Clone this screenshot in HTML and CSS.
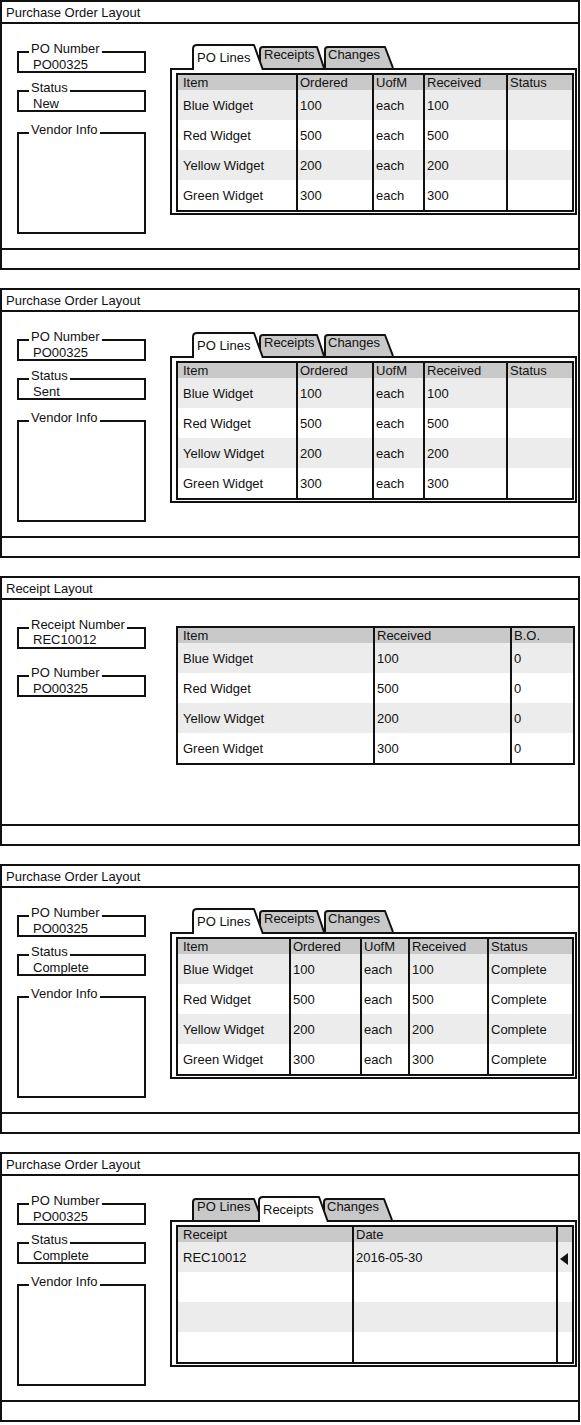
FILE: index.html
```html
<!DOCTYPE html>
<html>
<head>
    <meta charset="utf-8">
    <link rel="stylesheet" href="styles.css">
</head>
<body>
<div class="page">

    <!-- PO: new -->
    <section class="window">
        <div class="titlebar">Purchase Order Layout</div>
        <div class="window-body">
            <div class="side">
                <div class="field"><span class="field-label">PO Number</span><div class="field-value">PO00325</div></div>
                <div class="field field-next"><span class="field-label">Status</span><div class="field-value">New</div></div>
                <div class="field field-area"><span class="field-label">Vendor Info</span></div>
            </div>
            <div class="main">
                <div class="tabs">
                    <div class="tab tab-active tab-a">
                        <svg class="tab-shape" width="72" height="26" viewBox="0 0 72 26"><path d="M1 26V5Q1 1 5 1H62L71 26"/></svg>
                        <span class="tab-label">PO Lines</span>
                    </div>
                    <div class="tab tab-b">
                        <svg class="tab-shape" width="66" height="22" viewBox="0 0 66 22"><path d="M1 22V4Q1 1 4 1H58L65 22"/></svg>
                        <span class="tab-label">Receipts</span>
                    </div>
                    <div class="tab tab-c">
                        <svg class="tab-shape" width="70" height="22" viewBox="0 0 70 22"><path d="M1 22V4Q1 1 4 1H61L69 22"/></svg>
                        <span class="tab-label">Changes</span>
                    </div>
                </div>
                <div class="tabpanel">
                    <div class="grid grid-po">
                        <div class="grid-row grid-head"><div class="grid-cell">Item</div><div class="grid-cell">Ordered</div><div class="grid-cell">UofM</div><div class="grid-cell">Received</div><div class="grid-cell">Status</div></div>
                        <div class="grid-row"><div class="grid-cell">Blue Widget</div><div class="grid-cell">100</div><div class="grid-cell">each</div><div class="grid-cell">100</div><div class="grid-cell"></div></div>
                        <div class="grid-row"><div class="grid-cell">Red Widget</div><div class="grid-cell">500</div><div class="grid-cell">each</div><div class="grid-cell">500</div><div class="grid-cell"></div></div>
                        <div class="grid-row"><div class="grid-cell">Yellow Widget</div><div class="grid-cell">200</div><div class="grid-cell">each</div><div class="grid-cell">200</div><div class="grid-cell"></div></div>
                        <div class="grid-row"><div class="grid-cell">Green Widget</div><div class="grid-cell">300</div><div class="grid-cell">each</div><div class="grid-cell">300</div><div class="grid-cell"></div></div>
                    </div>
                </div>
            </div>
        </div>
        <div class="statusbar"></div>
    </section>

    <!-- PO: sent -->
    <section class="window">
        <div class="titlebar">Purchase Order Layout</div>
        <div class="window-body">
            <div class="side">
                <div class="field"><span class="field-label">PO Number</span><div class="field-value">PO00325</div></div>
                <div class="field field-next"><span class="field-label">Status</span><div class="field-value">Sent</div></div>
                <div class="field field-area"><span class="field-label">Vendor Info</span></div>
            </div>
            <div class="main">
                <div class="tabs">
                    <div class="tab tab-active tab-a">
                        <svg class="tab-shape" width="72" height="26" viewBox="0 0 72 26"><path d="M1 26V5Q1 1 5 1H62L71 26"/></svg>
                        <span class="tab-label">PO Lines</span>
                    </div>
                    <div class="tab tab-b">
                        <svg class="tab-shape" width="66" height="22" viewBox="0 0 66 22"><path d="M1 22V4Q1 1 4 1H58L65 22"/></svg>
                        <span class="tab-label">Receipts</span>
                    </div>
                    <div class="tab tab-c">
                        <svg class="tab-shape" width="70" height="22" viewBox="0 0 70 22"><path d="M1 22V4Q1 1 4 1H61L69 22"/></svg>
                        <span class="tab-label">Changes</span>
                    </div>
                </div>
                <div class="tabpanel">
                    <div class="grid grid-po">
                        <div class="grid-row grid-head"><div class="grid-cell">Item</div><div class="grid-cell">Ordered</div><div class="grid-cell">UofM</div><div class="grid-cell">Received</div><div class="grid-cell">Status</div></div>
                        <div class="grid-row"><div class="grid-cell">Blue Widget</div><div class="grid-cell">100</div><div class="grid-cell">each</div><div class="grid-cell">100</div><div class="grid-cell"></div></div>
                        <div class="grid-row"><div class="grid-cell">Red Widget</div><div class="grid-cell">500</div><div class="grid-cell">each</div><div class="grid-cell">500</div><div class="grid-cell"></div></div>
                        <div class="grid-row"><div class="grid-cell">Yellow Widget</div><div class="grid-cell">200</div><div class="grid-cell">each</div><div class="grid-cell">200</div><div class="grid-cell"></div></div>
                        <div class="grid-row"><div class="grid-cell">Green Widget</div><div class="grid-cell">300</div><div class="grid-cell">each</div><div class="grid-cell">300</div><div class="grid-cell"></div></div>
                    </div>
                </div>
            </div>
        </div>
        <div class="statusbar"></div>
    </section>

    <!-- Receipt -->
    <section class="window">
        <div class="titlebar">Receipt Layout</div>
        <div class="window-body">
            <div class="side">
                <div class="field"><span class="field-label">Receipt Number</span><div class="field-value field-value-tight">REC10012</div></div>
                <div class="field field-far"><span class="field-label">PO Number</span><div class="field-value">PO00325</div></div>
            </div>
            <div class="main main-receipt">
                <div class="grid grid-receipt">
                    <div class="grid-row grid-head"><div class="grid-cell">Item</div><div class="grid-cell">Received</div><div class="grid-cell">B.O.</div></div>
                    <div class="grid-row"><div class="grid-cell">Blue Widget</div><div class="grid-cell">100</div><div class="grid-cell">0</div></div>
                    <div class="grid-row"><div class="grid-cell">Red Widget</div><div class="grid-cell">500</div><div class="grid-cell">0</div></div>
                    <div class="grid-row"><div class="grid-cell">Yellow Widget</div><div class="grid-cell">200</div><div class="grid-cell">0</div></div>
                    <div class="grid-row"><div class="grid-cell">Green Widget</div><div class="grid-cell">300</div><div class="grid-cell">0</div></div>
                </div>
            </div>
        </div>
        <div class="statusbar"></div>
    </section>

    <!-- PO: complete -->
    <section class="window">
        <div class="titlebar">Purchase Order Layout</div>
        <div class="window-body">
            <div class="side">
                <div class="field"><span class="field-label">PO Number</span><div class="field-value">PO00325</div></div>
                <div class="field field-next"><span class="field-label">Status</span><div class="field-value">Complete</div></div>
                <div class="field field-area"><span class="field-label">Vendor Info</span></div>
            </div>
            <div class="main">
                <div class="tabs">
                    <div class="tab tab-active tab-a">
                        <svg class="tab-shape" width="72" height="26" viewBox="0 0 72 26"><path d="M1 26V5Q1 1 5 1H62L71 26"/></svg>
                        <span class="tab-label">PO Lines</span>
                    </div>
                    <div class="tab tab-b">
                        <svg class="tab-shape" width="66" height="22" viewBox="0 0 66 22"><path d="M1 22V4Q1 1 4 1H58L65 22"/></svg>
                        <span class="tab-label">Receipts</span>
                    </div>
                    <div class="tab tab-c">
                        <svg class="tab-shape" width="70" height="22" viewBox="0 0 70 22"><path d="M1 22V4Q1 1 4 1H61L69 22"/></svg>
                        <span class="tab-label">Changes</span>
                    </div>
                </div>
                <div class="tabpanel">
                    <div class="grid grid-done">
                        <div class="grid-row grid-head"><div class="grid-cell">Item</div><div class="grid-cell">Ordered</div><div class="grid-cell">UofM</div><div class="grid-cell">Received</div><div class="grid-cell">Status</div></div>
                        <div class="grid-row"><div class="grid-cell">Blue Widget</div><div class="grid-cell">100</div><div class="grid-cell">each</div><div class="grid-cell">100</div><div class="grid-cell">Complete</div></div>
                        <div class="grid-row"><div class="grid-cell">Red Widget</div><div class="grid-cell">500</div><div class="grid-cell">each</div><div class="grid-cell">500</div><div class="grid-cell">Complete</div></div>
                        <div class="grid-row"><div class="grid-cell">Yellow Widget</div><div class="grid-cell">200</div><div class="grid-cell">each</div><div class="grid-cell">200</div><div class="grid-cell">Complete</div></div>
                        <div class="grid-row"><div class="grid-cell">Green Widget</div><div class="grid-cell">300</div><div class="grid-cell">each</div><div class="grid-cell">300</div><div class="grid-cell">Complete</div></div>
                    </div>
                </div>
            </div>
        </div>
        <div class="statusbar"></div>
    </section>

    <!-- PO: receipts tab -->
    <section class="window">
        <div class="titlebar">Purchase Order Layout</div>
        <div class="window-body">
            <div class="side">
                <div class="field"><span class="field-label">PO Number</span><div class="field-value">PO00325</div></div>
                <div class="field field-next"><span class="field-label">Status</span><div class="field-value">Complete</div></div>
                <div class="field field-area"><span class="field-label">Vendor Info</span></div>
            </div>
            <div class="main">
                <div class="tabs">
                    <div class="tab tab-a">
                        <svg class="tab-shape" width="71" height="22" viewBox="0 0 71 22"><path d="M1 22V4Q1 1 4 1H62L70 22"/></svg>
                        <span class="tab-label">PO Lines</span>
                    </div>
                    <div class="tab tab-active tab-b">
                        <svg class="tab-shape" width="71" height="26" viewBox="0 0 71 26"><path d="M1 26V5Q1 1 5 1H61L70 26"/></svg>
                        <span class="tab-label">Receipts</span>
                    </div>
                    <div class="tab tab-c tab-c-wide">
                        <svg class="tab-shape" width="70" height="22" viewBox="0 0 70 22"><path d="M1 22V4Q1 1 4 1H61L69 22"/></svg>
                        <span class="tab-label">Changes</span>
                    </div>
                </div>
                <div class="tabpanel">
                    <div class="grid grid-rcpt">
                        <div class="grid-row grid-head"><div class="grid-cell">Receipt</div><div class="grid-cell">Date</div><div class="grid-cell"></div></div>
                        <div class="grid-row"><div class="grid-cell">REC10012</div><div class="grid-cell">2016-05-30</div><div class="grid-cell"><span class="marker"></span></div></div>
                        <div class="grid-row"><div class="grid-cell"></div><div class="grid-cell"></div><div class="grid-cell"></div></div>
                        <div class="grid-row"><div class="grid-cell"></div><div class="grid-cell"></div><div class="grid-cell"></div></div>
                        <div class="grid-row"><div class="grid-cell"></div><div class="grid-cell"></div><div class="grid-cell"></div></div>
                    </div>
                </div>
            </div>
        </div>
        <div class="statusbar"></div>
    </section>

</div>
</body>
</html>
```

FILE: styles.css
```css
* {
    box-sizing: border-box;
}
body {
    margin: 0;
    font-family: "Liberation Sans", Arial, sans-serif;
    font-size: 13px;
    color: #111;
    background-color: #fff;
}
.page {
    width: 580px;
    display: flex;
    flex-direction: column;
    gap: 18px;
}
.window {
    height: 270px;
    border: 2px solid #111;
    display: flex;
    flex-direction: column;
}
.titlebar {
    height: 22px;
    line-height: 20px;
    padding: 1px 0 0 4px;
    border-bottom: 2px solid #111;
}
.window-body {
    flex: 1;
    display: flex;
    padding-left: 15px;
}
.statusbar {
    height: 20px;
    border-top: 2px solid #111;
}

/* left column fields */
.side {
    width: 129px;
    padding-top: 27px;
}
.field {
    position: relative;
    height: 22px;
    border: 2px solid #111;
    padding-left: 12px;
}
.field-next {
    margin-top: 17px;
}
.field-far {
    margin-top: 26px;
}
.field-area {
    height: 102px;
    margin-top: 20px;
}
.field-label {
    position: absolute;
    left: 10px;
    top: -11px;
    line-height: 13px;
    padding: 0 2px;
    background-color: #fff;
    white-space: nowrap;
}
.field-value {
    padding: 5px 0 0 2px;
    line-height: 13px;
}
.field-value-tight {
    padding-top: 4px;
}

/* right column */
.main {
    margin-left: 24px;
    padding-top: 20px;
}
.main-receipt {
    margin-left: 30px;
    padding-top: 26px;
}
.tabs {
    position: relative;
    z-index: 2;
    display: flex;
    align-items: flex-end;
    height: 24px;
    padding-left: 22px;
}
.tab {
    position: relative;
    height: 22px;
}
.tab-a {
    width: 71px;
    z-index: 3;
}
.tab-b {
    width: 66px;
    margin-left: -5px;
    z-index: 2;
}
.tab-c {
    width: 70px;
    margin-left: -1px;
    z-index: 1;
}
.tab-c-wide {
    margin-left: -6px;
}
.tab-active {
    height: 26px;
    margin-bottom: -2px;
    z-index: 4;
}
.tab-active.tab-a {
    width: 72px;
}
.tab-active.tab-b {
    width: 71px;
}
.tab-shape {
    position: absolute;
    left: 0;
    top: 0;
}
.tab-shape path {
    fill: #c8c8c8;
    stroke: #111;
    stroke-width: 2;
    stroke-linejoin: round;
}
.tab-active .tab-shape path {
    fill: #fff;
}
.tab-label {
    position: relative;
    display: block;
    padding: 2px 0 0 5px;
    line-height: 14px;
    white-space: nowrap;
}
.tab-c .tab-label {
    padding-left: 4px;
}
.tab-active .tab-label {
    padding-top: 7px;
}
.tabpanel {
    width: 407px;
    border: 2px solid #111;
    padding: 3px 1px 1px 4px;
}

/* data grids */
.grid {
    border: 2px solid #111;
}
.grid-po {
    --cols: 118px 76px 51px 83px 66px;
}
.grid-done {
    --cols: 111px 71px 48px 79px 85px;
}
.grid-receipt {
    width: 399px;
    --cols: 195px 137px 63px;
}
.grid-rcpt {
    --cols: 174px 204px 16px;
}
.grid-row {
    display: grid;
    grid-template-columns: var(--cols);
    height: 30px;
    line-height: 28px;
    padding-top: 2px;
}
.grid-row:nth-child(even) {
    background-color: #ececec;
}
.grid-head {
    height: 15px;
    line-height: 15px;
    padding-top: 0;
    background-color: #c9c9c9;
}
.grid-cell {
    border-left: 2px solid #111;
    padding-left: 2px;
    white-space: nowrap;
    overflow: hidden;
}
.grid-row .grid-cell {
    margin-top: -2px;
    padding-top: 2px;
}
.grid-head .grid-cell {
    margin-top: 0;
    padding-top: 0;
}
.grid-cell:first-child {
    border-left: 0;
    padding-left: 5px;
}
.marker {
    display: inline-block;
    width: 0;
    height: 0;
    vertical-align: middle;
    border-top: 6px solid transparent;
    border-bottom: 6px solid transparent;
    border-right: 8px solid #111;
}
```
